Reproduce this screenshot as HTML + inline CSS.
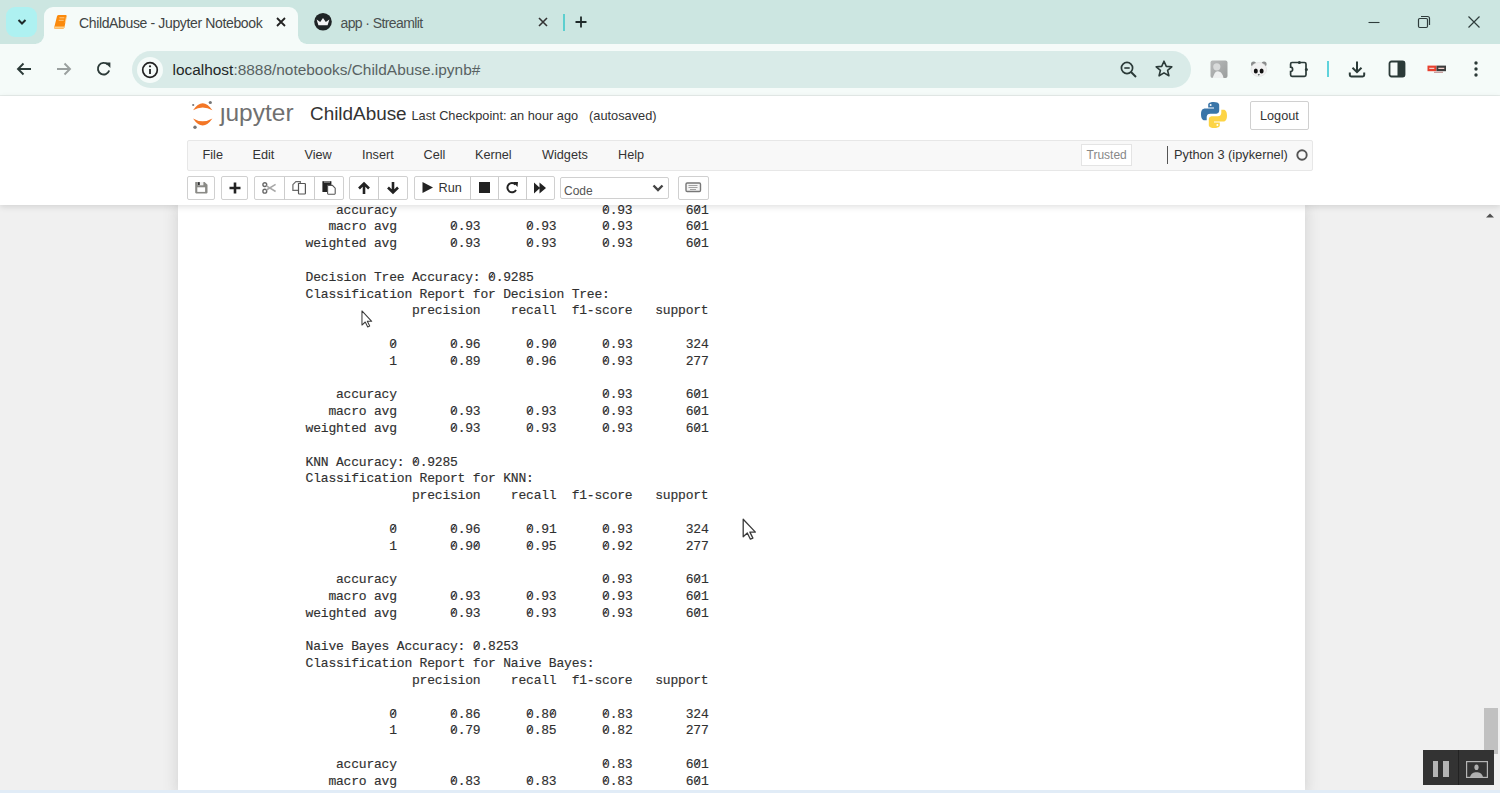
<!DOCTYPE html>
<html><head><meta charset="utf-8">
<style>
*{box-sizing:border-box;margin:0;padding:0}
html,body{width:1500px;height:793px;overflow:hidden;background:#f0f0f0;font-family:"Liberation Sans",sans-serif}
.a{position:absolute}
#tabs{left:0;top:0;width:1500px;height:44px;background:#cce6e1}
#toolbar{left:0;top:44px;width:1500px;height:52px;background:#f5fbf9;border-bottom:1px solid #e6ecea}
#omni{left:132px;top:50.5px;width:1059px;height:37px;border-radius:19px;background:#d9ebe8}
#hdr{left:0;top:96px;width:1500px;height:109px;background:#fff;box-shadow:0 2px 6px rgba(0,0,0,.12);z-index:2}
#panel{left:178px;top:205px;width:1127px;height:590px;background:#fff;box-shadow:0 0 14px 0 rgba(87,87,87,.22)}
pre{font-family:"Liberation Mono",monospace;font-size:13px;line-height:16.79px;letter-spacing:-0.2px;color:#303030;-webkit-text-stroke:0.15px #303030}
.z{font-style:normal;position:relative}.z::after{content:"";position:absolute;left:3.3px;top:2.6px;width:1.1px;height:7.4px;background:#303030;transform:rotate(37deg)}
.mb{font-size:12.7px;line-height:16px;color:#333}
.btn{background:#fff;border:1px solid #d0d0d0;border-radius:2px}
</style></head><body>
<!-- tab strip -->
<div id="tabs" class="a"></div>
<!-- active tab -->
<div class="a" style="left:44px;top:7px;width:254px;height:40px;background:#f5fbf9;border-radius:9px 9px 0 0"></div>
<div class="a" style="left:36px;top:36px;width:8px;height:8px;background:#f5fbf9"></div>
<div class="a" style="left:28px;top:28px;width:16px;height:16px;background:#cce6e1;border-radius:0 0 9px 0"></div>
<div class="a" style="left:298px;top:36px;width:8px;height:8px;background:#f5fbf9"></div>
<div class="a" style="left:298px;top:28px;width:16px;height:16px;background:#cce6e1;border-radius:0 0 0 9px"></div>
<div class="a" style="left:6px;top:7px;width:31px;height:30px;border-radius:9px;background:#aef1f1"></div>
<svg class="a" style="left:14px;top:14px" width="16" height="16" viewBox="0 0 16 16"><path d="M4.5 6 L8 9.5 L11.5 6" fill="none" stroke="#1f2a2a" stroke-width="2"/></svg>
<svg class="a" style="left:52px;top:14px" width="18" height="16" viewBox="0 0 18 16"><path d="M6.8 1 L13.6 1 Q14.9 1 14.6 2.3 L12.4 13.6 Q12.2 14.7 11 14.7 L3.2 14.7 Q1.9 14.7 2.2 13.4 L5 2.3 Q5.4 1 6.8 1 Z" fill="#fb8a0c"/><path d="M2.4 12.4 L12.7 12.4 L12.4 13.8 Q12.2 14.5 11.2 14.5 L3.2 14.5 Q2.1 14.5 2.3 13.4 Z" fill="#ffcf86"/><path d="M7.4 3.8h5M6.7 6.3h5" stroke="#ffc880" stroke-width="1"/><path d="M14.4 3 L13.2 9" stroke="#ffd9a0" stroke-width="0.8"/></svg>
<div class="a" style="left:79px;top:12.8px;font-size:14px;letter-spacing:-0.36px;color:#3f4444;line-height:20px">ChildAbuse - Jupyter Notebook</div>
<svg class="a" style="left:275px;top:16px" width="12" height="12" viewBox="0 0 12 12"><path d="M2 2 L10 10 M10 2 L2 10" stroke="#222" stroke-width="1.8"/></svg>
<svg class="a" style="left:313px;top:12px" width="20" height="20" viewBox="0 0 20 20"><circle cx="10" cy="9.8" r="8.8" fill="#1f2426"/><path d="M3.6 7.6 L7.2 10 L10 5.9 L12.8 10 L16.4 7.6 L14.6 13.2 L5.4 13.2 Z" fill="#f4f4f6"/></svg>
<div class="a" style="left:340.5px;top:12.8px;font-size:14px;letter-spacing:-0.6px;color:#4a5050;line-height:20px">app · Streamlit</div>
<svg class="a" style="left:537px;top:16px" width="12" height="12" viewBox="0 0 12 12"><path d="M2 2 L10 10 M10 2 L2 10" stroke="#333" stroke-width="1.6"/></svg>
<div class="a" style="left:562.5px;top:13.5px;width:2px;height:17px;background:#5dcfcf"></div>
<svg class="a" style="left:574px;top:15px" width="14" height="14" viewBox="0 0 14 14"><path d="M7 1.5v11M1.5 7h11" stroke="#1f2a2a" stroke-width="1.8"/></svg>
<svg class="a" style="left:1366px;top:15px" width="16" height="14" viewBox="0 0 16 14"><path d="M2.5 7.5h11" stroke="#2f3d3c" stroke-width="1.1"/></svg>
<svg class="a" style="left:1416px;top:14px" width="16" height="16" viewBox="0 0 16 16"><rect x="2.5" y="4.5" width="9" height="9" rx="1.2" fill="none" stroke="#2f3d3c" stroke-width="1.2"/><path d="M5 2.5 h6.5 a2 2 0 0 1 2 2 v6.5" fill="none" stroke="#2f3d3c" stroke-width="1.2"/></svg>
<svg class="a" style="left:1466px;top:14px" width="16" height="16" viewBox="0 0 16 16"><path d="M2.5 2.5 L13.5 13.5 M13.5 2.5 L2.5 13.5" stroke="#2f3d3c" stroke-width="1.2"/></svg>
<div id="toolbar" class="a"></div>
<svg class="a" style="left:15px;top:61px" width="18" height="16" viewBox="0 0 18 16"><path d="M16 8 H3 M8.5 2.5 L3 8 L8.5 13.5" fill="none" stroke="#2b3a38" stroke-width="1.9"/></svg>
<svg class="a" style="left:54.5px;top:61px" width="18" height="16" viewBox="0 0 18 16"><path d="M2 8 H15 M9.5 2.5 L15 8 L9.5 13.5" fill="none" stroke="#9aa09f" stroke-width="1.9"/></svg>
<svg class="a" style="left:94.5px;top:60px" width="18" height="18" viewBox="0 0 18 18"><path d="M14.2 10.5 A5.8 5.8 0 1 1 12.8 4.6" fill="none" stroke="#2b3a38" stroke-width="1.9"/><path d="M10 2.6 L15.4 2.6 L15.4 8 Z" fill="#2b3a38"/></svg>
<div id="omni" class="a"></div>
<div class="a" style="left:137px;top:56.5px;width:26px;height:26px;border-radius:50%;background:#f5fbf9"></div>
<svg class="a" style="left:141px;top:60.5px" width="18" height="18" viewBox="0 0 18 18"><circle cx="9" cy="9" r="7.3" fill="none" stroke="#222" stroke-width="1.7"/><path d="M9 8v5" stroke="#222" stroke-width="1.8"/><circle cx="9" cy="5.3" r="1.1" fill="#222"/></svg>
<div class="a" style="left:172.5px;top:59.7px;font-size:15.43px;color:#586262;line-height:20px"><span style="color:#1f2626">localhost</span>:8888/notebooks/ChildAbuse.ipynb#</div>
<svg class="a" style="left:1119px;top:60px" width="20" height="20" viewBox="0 0 20 20"><circle cx="8" cy="8" r="5.6" fill="none" stroke="#2b3a38" stroke-width="1.7"/><path d="M5.3 8h5.4" stroke="#2b3a38" stroke-width="1.6"/><path d="M12 12 L17 17" stroke="#2b3a38" stroke-width="2"/></svg>
<svg class="a" style="left:1154px;top:59px" width="20" height="20" viewBox="0 0 20 20"><path d="M10 2.2 L12.3 7.4 L17.8 7.8 L13.6 11.4 L14.9 16.8 L10 13.9 L5.1 16.8 L6.4 11.4 L2.2 7.8 L7.7 7.4 Z" fill="none" stroke="#2b3a38" stroke-width="1.6" stroke-linejoin="round"/></svg>
<svg class="a" style="left:1210px;top:60px" width="18" height="18" viewBox="0 0 18 18"><defs><linearGradient id="g1" x1="0" y1="0" x2="1" y2="1"><stop offset="0" stop-color="#b9bbbb"/><stop offset="1" stop-color="#9a9d9d"/></linearGradient></defs><rect x="0.5" y="0.5" width="17" height="17.4" rx="2" fill="url(#g1)"/><circle cx="6.8" cy="6.8" r="3.6" fill="#d8dada"/><path d="M2.5 18 L4.8 13 Q6 10.8 9 11.5 Q12.5 12.5 13.5 18 Z" fill="#eef0f0"/></svg>
<svg class="a" style="left:1249px;top:60px" width="19" height="18" viewBox="0 0 19 18"><circle cx="4.6" cy="4" r="2.6" fill="#8a8c8c"/><circle cx="15" cy="4" r="2.6" fill="#8a8c8c"/><ellipse cx="9.8" cy="9.5" rx="7.8" ry="7" fill="#f1f1f1" stroke="#d6d6d6" stroke-width=".5"/><ellipse cx="6.8" cy="11" rx="2" ry="2.6" fill="#111"/><ellipse cx="12.6" cy="11" rx="2" ry="2.6" fill="#111"/><path d="M8.7 14.3 h2.2 l-1.1 1.4z" fill="#2b3a38"/></svg>
<svg class="a" style="left:1289px;top:60px" width="20" height="20" viewBox="0 0 20 20"><path d="M3 2.5 H15.5 Q17 2.5 17 4 V14.8 Q17 16.4 15.5 16.4 H3 Q1.6 16.4 1.6 14.8 V11.6 A2 2.2 0 0 0 1.6 7.2 V4 Q1.6 2.5 3 2.5 Z" fill="none" stroke="#2b3a38" stroke-width="1.7"/><circle cx="10.4" cy="2.4" r="1.5" fill="#2b3a38"/><circle cx="17.4" cy="9.5" r="1.5" fill="#2b3a38"/></svg>
<div class="a" style="left:1326.5px;top:61px;width:2px;height:16px;background:#5fd3dc"></div>
<svg class="a" style="left:1347px;top:59px" width="20" height="20" viewBox="0 0 20 20"><path d="M10 2.5v10.5 M5.5 8.8 L10 13.2 L14.5 8.8" fill="none" stroke="#2b3a38" stroke-width="2"/><path d="M2.8 13.5v2.6q0 1.4 1.4 1.4h11.6q1.4 0 1.4-1.4v-2.6" fill="none" stroke="#2b3a38" stroke-width="2"/></svg>
<svg class="a" style="left:1388px;top:60px" width="18" height="18" viewBox="0 0 18 18"><rect x="1.5" y="1.5" width="15" height="15" rx="2" fill="none" stroke="#2b3a38" stroke-width="1.8"/><rect x="9.5" y="1.5" width="7" height="15" fill="#2b3a38"/></svg>
<svg class="a" style="left:1426px;top:64px" width="22" height="11" viewBox="0 0 22 11"><rect x="1.5" y="1.6" width="9" height="5.6" fill="#e8412f"/><rect x="10.5" y="1.6" width="9.5" height="5.6" fill="#3d3d3d"/><rect x="8" y="7.6" width="9" height="1.4" fill="#c8a0a0"/><path d="M3.3 4.4h5M12.3 4.4h6" stroke="#f3d0cc" stroke-width="1.1"/></svg>
<svg class="a" style="left:1471px;top:60px" width="10" height="18" viewBox="0 0 10 18"><circle cx="5" cy="3" r="1.7" fill="#2b3a38"/><circle cx="5" cy="9" r="1.7" fill="#2b3a38"/><circle cx="5" cy="15" r="1.7" fill="#2b3a38"/></svg>
<!-- page header -->
<div id="hdr" class="a"></div>
<!-- jupyter logo -->
<svg class="a" style="left:186px;top:98px;z-index:3" width="34" height="34" viewBox="0 0 34 34">
<path d="M7 12.3 Q16.7 -1.8 26.4 12.3 Q16.7 6.6 7 12.3 Z" fill="#f37626"/>
<path d="M7 20.5 Q16.7 34.6 26.4 20.5 Q16.7 26.2 7 20.5 Z" fill="#f37626"/>
<circle cx="24.3" cy="4.5" r="1.6" fill="#767677"/>
<circle cx="7.2" cy="7" r="1.1" fill="#767677"/>
<circle cx="9" cy="29.2" r="1.7" fill="#767677"/>
</svg>
<div class="a" style="left:220px;top:98px;font-size:24.5px;line-height:30px;color:#707070;z-index:3">&#x237;upyter</div>
<div class="a" style="left:310px;top:102px;font-size:18.9px;line-height:24px;color:#333;z-index:3">ChildAbuse</div>
<div class="a" style="left:411.5px;top:108px;font-size:12.76px;line-height:16px;color:#333;z-index:3">Last Checkpoint: an hour ago</div>
<div class="a" style="left:589px;top:108px;font-size:12.8px;line-height:16px;color:#333;z-index:3">(autosaved)</div>
<!-- python logo -->
<svg class="a" style="left:1200px;top:101px;z-index:3" width="28" height="28" viewBox="0 0 28 28">
<path d="M13.8 1 C8 1 8.2 3.5 8.2 3.5 L8.2 6.5 L14 6.5 L14 7.5 L5 7.5 C5 7.5 1 7 1 13.3 C1 19.5 4.5 19.3 4.5 19.3 L6.7 19.3 L6.7 16.3 C6.7 16.3 6.6 12.8 10.1 12.8 L15.9 12.8 C15.9 12.8 19.2 12.9 19.2 9.6 L19.2 4.3 C19.2 4.3 19.7 1 13.8 1 Z" fill="#3a75a8"/>
<circle cx="10.6" cy="3.9" r="1" fill="#fff"/>
<path d="M14.2 27 C20 27 19.8 24.5 19.8 24.5 L19.8 21.5 L14 21.5 L14 20.5 L23 20.5 C23 20.5 27 21 27 14.7 C27 8.5 23.5 8.7 23.5 8.7 L21.3 8.7 L21.3 11.7 C21.3 11.7 21.4 15.2 17.9 15.2 L12.1 15.2 C12.1 15.2 8.8 15.1 8.8 18.4 L8.8 23.7 C8.8 23.7 8.3 27 14.2 27 Z" fill="#fdd445"/>
<circle cx="17.4" cy="24.1" r="1" fill="#fff"/>
</svg>
<div class="a btn" style="left:1250px;top:101px;width:59px;height:29px;z-index:3"></div>
<div class="a" style="left:1260px;top:108px;font-size:12.7px;line-height:16px;color:#333;z-index:3">Logout</div>
<!-- menubar -->
<div class="a" style="left:187px;top:139.5px;width:1126px;height:31px;background:#f8f8f8;border:1px solid #e7e7e7;border-radius:2px;z-index:3"></div>
<div class="a mb" style="left:202.5px;top:147px;z-index:3">File</div>
<div class="a mb" style="left:252.5px;top:147px;z-index:3">Edit</div>
<div class="a mb" style="left:304.5px;top:147px;z-index:3">View</div>
<div class="a mb" style="left:362px;top:147px;z-index:3">Insert</div>
<div class="a mb" style="left:423.5px;top:147px;z-index:3">Cell</div>
<div class="a mb" style="left:475px;top:147px;z-index:3">Kernel</div>
<div class="a mb" style="left:542px;top:147px;z-index:3">Widgets</div>
<div class="a mb" style="left:618px;top:147px;z-index:3">Help</div>
<div class="a" style="left:1080.5px;top:144px;width:51px;height:22px;border:1px solid #e4e4e4;background:#fff;z-index:3"></div>
<div class="a" style="left:1086.5px;top:148px;font-size:12px;line-height:14px;color:#888;z-index:3">Trusted</div>
<div class="a" style="left:1167px;top:146px;width:1.2px;height:18px;background:#555;z-index:3"></div>
<div class="a mb" style="left:1174px;top:147px;font-size:12.8px;z-index:3">Python 3 (ipykernel)</div>
<svg class="a" style="left:1295.2px;top:147.6px;z-index:3" width="14" height="14" viewBox="0 0 14 14"><circle cx="7" cy="7" r="4.7" fill="none" stroke="#555" stroke-width="1.9"/></svg>
<!-- toolbar buttons -->
<div class="a btn" style="left:187px;top:176px;width:28px;height:24px;z-index:3"></div>
<div class="a btn" style="left:221px;top:176px;width:27px;height:24px;z-index:3"></div>
<div class="a btn" style="left:254px;top:176px;width:89.5px;height:24px;z-index:3"></div>
<div class="a" style="left:283.5px;top:177px;width:1px;height:23px;background:#ccc;z-index:3"></div>
<div class="a" style="left:313.5px;top:177px;width:1px;height:23px;background:#ccc;z-index:3"></div>
<div class="a btn" style="left:349px;top:176px;width:58.5px;height:24px;z-index:3"></div>
<div class="a" style="left:378px;top:177px;width:1px;height:23px;background:#ccc;z-index:3"></div>
<div class="a btn" style="left:414px;top:176px;width:141px;height:24px;z-index:3"></div>
<div class="a" style="left:469.5px;top:177px;width:1.5px;height:23px;background:#ccc;z-index:3"></div>
<div class="a" style="left:498px;top:177px;width:1px;height:23px;background:#ccc;z-index:3"></div>
<div class="a" style="left:526px;top:177px;width:1px;height:23px;background:#ccc;z-index:3"></div>
<div class="a btn" style="left:559.5px;top:177px;width:109px;height:22px;z-index:3"></div>
<div class="a" style="left:564px;top:184px;font-size:12px;line-height:14px;color:#555;z-index:3">Code</div>
<svg class="a" style="left:650px;top:181px;z-index:3" width="16" height="14" viewBox="0 0 16 14"><path d="M3.5 4.5 L8 9 L12.5 4.5" fill="none" stroke="#444" stroke-width="2.4"/></svg>
<div class="a btn" style="left:678px;top:176px;width:30.5px;height:24px;z-index:3"></div>
<svg class="a" style="left:685px;top:182px;z-index:3" width="17" height="11" viewBox="0 0 17 11"><rect x="1" y="1" width="14.5" height="8.5" rx="1.2" fill="#f4f4f4" stroke="#777" stroke-width="1.4"/><path d="M3.5 3.5h9M3.5 5.5h9M5 7.5h6" stroke="#999" stroke-width="0.9"/></svg>
<!-- icons -->
<svg class="a" style="left:194px;top:181px;z-index:3" width="14" height="14" viewBox="0 0 14 14"><path d="M1.6 0.9 H10.6 L13.5 3.8 V11.6 Q13.5 12.4 12.7 12.4 H2.1 Q1.2 12.4 1.2 11.6 V1.6 Q1.2 0.9 1.6 0.9 Z" fill="#8a8a86"/><rect x="3.3" y="6.3" width="7.8" height="4.6" fill="#fff"/><rect x="3.6" y="0.9" width="5.8" height="3.4" fill="#f0f0f0"/><rect x="3.8" y="1.1" width="2" height="3" fill="#333"/></svg>
<svg class="a" style="left:228px;top:180.5px;z-index:3" width="14" height="14" viewBox="0 0 14 14"><path d="M7 1.5v11M1.5 7h11" stroke="#222" stroke-width="2.6"/></svg>
<svg class="a" style="left:261px;top:181px;z-index:3" width="16" height="14" viewBox="0 0 16 14"><circle cx="3.8" cy="3.6" r="1.9" fill="none" stroke="#6a6a6a" stroke-width="1.4"/><circle cx="3.8" cy="10.2" r="1.9" fill="none" stroke="#6a6a6a" stroke-width="1.4"/><path d="M5.4 4.8 L14.6 10.5 M5.4 9 L14.6 3.3" stroke="#a8a8a8" stroke-width="1.5"/></svg>
<svg class="a" style="left:292px;top:180px;z-index:3" width="15" height="16" viewBox="0 0 15 16"><path d="M0.9 4.6 L3.9 1.6 H8.3 V10.4 H0.9 Z" fill="#fff" stroke="#6a6a6a" stroke-width="1.2"/><path d="M6.5 3.5 H12.6 Q13.4 3.5 13.4 4.3 V13.2 Q13.4 14 12.6 14 H7.3 Q6.5 14 6.5 13.2 Z" fill="#fff" stroke="#555" stroke-width="1.2"/></svg>
<svg class="a" style="left:321px;top:180px;z-index:3" width="16" height="16" viewBox="0 0 16 16"><rect x="1.4" y="1.2" width="9" height="10.8" fill="#222"/><rect x="3" y="1.2" width="6" height="1.6" fill="#888"/><path d="M6.6 5.4 H11.4 L14.2 8.2 V13.6 Q14.2 14.2 13.6 14.2 H7.2 Q6.6 14.2 6.6 13.6 Z" fill="#fff" stroke="#555" stroke-width="1.1"/></svg>
<svg class="a" style="left:357px;top:181px;z-index:3" width="14" height="14" viewBox="0 0 14 14"><path d="M7 13V3M2 7.5 L7 2.5 L12 7.5" fill="none" stroke="#222" stroke-width="2.6"/></svg>
<svg class="a" style="left:386px;top:181px;z-index:3" width="14" height="14" viewBox="0 0 14 14"><path d="M7 1v10M2 6.5 L7 11.5 L12 6.5" fill="none" stroke="#222" stroke-width="2.6"/></svg>
<svg class="a" style="left:421px;top:181px;z-index:3" width="13" height="13" viewBox="0 0 13 13"><path d="M1.5 1 L12 6.5 L1.5 12 Z" fill="#222"/></svg>
<div class="a" style="left:438.5px;top:180px;font-size:12.7px;line-height:16px;color:#333;z-index:3">Run</div>
<div class="a" style="left:479px;top:182px;width:11px;height:11px;background:#222;z-index:3"></div>
<svg class="a" style="left:505px;top:181px;z-index:3" width="14" height="14" viewBox="0 0 14 14"><path d="M11 9 A4.6 4.6 0 1 1 10.4 3.6" fill="none" stroke="#222" stroke-width="2"/><path d="M8 1 L13 1 L12.5 6 Z" fill="#222"/></svg>
<svg class="a" style="left:533px;top:182px;z-index:3" width="14" height="12" viewBox="0 0 14 12"><path d="M1 0.5 L7 6 L1 11.5 Z M6.5 0.5 L13 6 L6.5 11.5 Z" fill="#222"/></svg>
<div id="panel" class="a"></div>
<pre class="a" style="left:305.6px;top:202.6px;z-index:1">    accuracy                           <i class="z">0</i>.93       6<i class="z">0</i>1
   macro avg       <i class="z">0</i>.93      <i class="z">0</i>.93      <i class="z">0</i>.93       6<i class="z">0</i>1
weighted avg       <i class="z">0</i>.93      <i class="z">0</i>.93      <i class="z">0</i>.93       6<i class="z">0</i>1

Decision Tree Accuracy: <i class="z">0</i>.9285
Classification Report for Decision Tree:
              precision    recall  f1-score   support

           <i class="z">0</i>       <i class="z">0</i>.96      <i class="z">0</i>.9<i class="z">0</i>      <i class="z">0</i>.93       324
           1       <i class="z">0</i>.89      <i class="z">0</i>.96      <i class="z">0</i>.93       277

    accuracy                           <i class="z">0</i>.93       6<i class="z">0</i>1
   macro avg       <i class="z">0</i>.93      <i class="z">0</i>.93      <i class="z">0</i>.93       6<i class="z">0</i>1
weighted avg       <i class="z">0</i>.93      <i class="z">0</i>.93      <i class="z">0</i>.93       6<i class="z">0</i>1

KNN Accuracy: <i class="z">0</i>.9285
Classification Report for KNN:
              precision    recall  f1-score   support

           <i class="z">0</i>       <i class="z">0</i>.96      <i class="z">0</i>.91      <i class="z">0</i>.93       324
           1       <i class="z">0</i>.9<i class="z">0</i>      <i class="z">0</i>.95      <i class="z">0</i>.92       277

    accuracy                           <i class="z">0</i>.93       6<i class="z">0</i>1
   macro avg       <i class="z">0</i>.93      <i class="z">0</i>.93      <i class="z">0</i>.93       6<i class="z">0</i>1
weighted avg       <i class="z">0</i>.93      <i class="z">0</i>.93      <i class="z">0</i>.93       6<i class="z">0</i>1

Naive Bayes Accuracy: <i class="z">0</i>.8253
Classification Report for Naive Bayes:
              precision    recall  f1-score   support

           <i class="z">0</i>       <i class="z">0</i>.86      <i class="z">0</i>.8<i class="z">0</i>      <i class="z">0</i>.83       324
           1       <i class="z">0</i>.79      <i class="z">0</i>.85      <i class="z">0</i>.82       277

    accuracy                           <i class="z">0</i>.83       6<i class="z">0</i>1
   macro avg       <i class="z">0</i>.83      <i class="z">0</i>.83      <i class="z">0</i>.83       6<i class="z">0</i>1
</pre>
<!-- scrollbar -->
<div class="a" style="left:1480px;top:206px;width:20px;height:584px;background:#f0f0f0;z-index:1"></div>
<svg class="a" style="left:1484px;top:210px;z-index:1" width="12" height="10" viewBox="0 0 12 10"><path d="M2 7.5 L6 3.5 L10 7.5 Z" fill="#505050"/></svg>
<div class="a" style="left:1483.5px;top:708px;width:14px;height:46px;background:#c1c1c1;z-index:1"></div>
<!-- video overlay -->
<div class="a" style="left:1423px;top:750px;width:71px;height:35px;background:#333;z-index:6"></div>
<div class="a" style="left:1458px;top:750px;width:1px;height:35px;background:#222;z-index:6"></div>
<div class="a" style="left:1433px;top:761px;width:5px;height:15.5px;background:#b5b5b5;z-index:6"></div>
<div class="a" style="left:1443px;top:761px;width:5.5px;height:15.5px;background:#b5b5b5;z-index:6"></div>
<svg class="a" style="left:1466px;top:760.5px;z-index:6" width="22" height="17" viewBox="0 0 22 17"><rect x="0.6" y="0.6" width="20.8" height="15.8" fill="none" stroke="#b5b5b5" stroke-width="1.2"/><ellipse cx="10.5" cy="6.2" rx="2.1" ry="2.8" fill="#b0b0b0"/><path d="M4 16 Q5 12 9.3 11.3 L11.7 11.3 Q16 12 17 16 Z" fill="#b0b0b0"/></svg>
<!-- cursors -->
<svg class="a" style="left:361.4px;top:310.1px;z-index:7" width="12.8" height="18.4" viewBox="0 0 16 23"><path d="M1.2 1.2 L1.2 18.8 L5.3 15 L8.4 21.2 L10.9 20.1 L7.9 14.1 L13.4 14.1 Z" fill="#fff" stroke="#3a3a3a" stroke-width="1.3" stroke-linejoin="round"/></svg>
<svg class="a" style="left:741.6px;top:517.6px;z-index:7" width="16" height="23" viewBox="0 0 16 23"><path d="M1.2 1.2 L1.2 18.8 L5.3 15 L8.4 21.2 L10.9 20.1 L7.9 14.1 L13.4 14.1 Z" fill="#fff" stroke="#3a3a3a" stroke-width="1.3" stroke-linejoin="round"/></svg>
<div class="a" style="left:0;top:790.4px;width:1500px;height:3px;background:#e1ecf7;z-index:5"></div>
</body></html>
